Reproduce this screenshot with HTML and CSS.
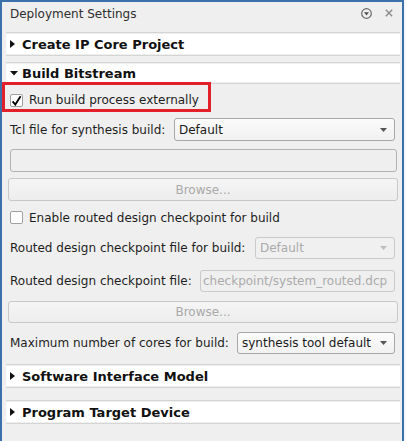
FILE: index.html
```html
<!DOCTYPE html>
<html>
<head>
<meta charset="utf-8">
<link rel="stylesheet" href="styles.css">
</head>
<body>
<div class="panel">
  <div class="titlebar">
    <span class="title">Deployment Settings</span>
    <span class="tb-icons">
      <svg class="ic-menu" width="11" height="11" viewBox="0 0 11 11"><circle cx="5.5" cy="5.5" r="4.8" fill="none" stroke="#6b6b6b" stroke-width="1.2"/><polygon points="3,4.2 8,4.2 5.5,7.4" fill="#505050"/></svg>
      <svg class="ic-close" width="8" height="8" viewBox="0 0 8 8"><path d="M0.8 0.8 L7.2 7.2 M7.2 0.8 L0.8 7.2" stroke="#8c8c8c" stroke-width="1.4" fill="none"/></svg>
    </span>
  </div>

  <div class="sec sec-create">
    <div class="sec-bar"><span class="tw"><svg width="5" height="8" viewBox="0 0 5 8"><polygon points="0,0 5,4 0,8" fill="#111"/></svg></span>Create IP Core Project</div>
  </div>

  <div class="sec sec-build">
    <div class="sec-bar"><span class="tw"><svg width="8" height="5" viewBox="0 0 8 5"><polygon points="0,0 8,0 4,4.5" fill="#111"/></svg></span>Build Bitstream</div>
  </div>

  <div class="build-body">
    <div class="check-row cr1">
      <span class="cb"><svg width="11" height="11" viewBox="0 0 11 11"><path d="M1.6 6.4 L4.3 9.6 L9.6 1.2" fill="none" stroke="#000" stroke-width="1.8"/></svg></span>
      <span>Run build process externally</span>
      <span class="hl"></span>
    </div>

    <div class="row r-tcl">
      <span class="lbl">Tcl file for synthesis build:</span>
      <div class="combo w-tcl"><span class="val">Default</span><svg class="arr" width="7" height="4" viewBox="0 0 7 4"><polygon points="0,0 7,0 3.5,4" fill="#555"/></svg></div>
    </div>

    <div class="field f1"></div>
    <div class="btn b1">Browse...</div>

    <div class="check-row cr2">
      <span class="cb"></span>
      <span>Enable routed design checkpoint for build</span>
    </div>

    <div class="row r-rc">
      <span class="lbl">Routed design checkpoint file for build:</span>
      <div class="combo dis w-rc"><span class="val">Default</span><svg class="arr" width="7" height="4" viewBox="0 0 7 4"><polygon points="0,0 7,0 3.5,4" fill="#bdbdbd"/></svg></div>
    </div>

    <div class="row r-rf">
      <span class="lbl">Routed design checkpoint file:</span>
      <div class="field dis w-rf">checkpoint/system_routed.dcp</div>
    </div>

    <div class="btn b2">Browse...</div>

    <div class="row r-max">
      <span class="lbl">Maximum number of cores for build:</span>
      <div class="combo w-max"><span class="val">synthesis tool default</span><svg class="arr" width="7" height="4" viewBox="0 0 7 4"><polygon points="0,0 7,0 3.5,4" fill="#555"/></svg></div>
    </div>
  </div>

  <div class="sec sec-sw">
    <div class="sec-bar"><span class="tw"><svg width="5" height="8" viewBox="0 0 5 8"><polygon points="0,0 5,4 0,8" fill="#111"/></svg></span>Software Interface Model</div>
  </div>

  <div class="sec sec-prog">
    <div class="sec-bar"><span class="tw"><svg width="5" height="8" viewBox="0 0 5 8"><polygon points="0,0 5,4 0,8" fill="#111"/></svg></span>Program Target Device</div>
  </div>
</div>
</body>
</html>
```

FILE: styles.css
```css
* { box-sizing: border-box; }
html, body { margin: 0; padding: 0; }
body {
  width: 406px;
  height: 441px;
  overflow: hidden;
  background: #f7f7f7;
  font-family: "DejaVu Sans", "Noto Sans", sans-serif;
  font-size: 12px;
  color: #1e1e1e;
}
.panel {
  width: 404px;
  height: 441px;
  border: 2px solid #3b71a8;
  border-bottom: none;
  background: #efefef;
  overflow: hidden;
}
.titlebar {
  display: flex;
  align-items: center;
  height: 24px;
  padding: 0 9px 0 8px;
  margin-bottom: 6px;
  color: #2e2e2e;
}
.title { flex: 1; }
.tb-icons {
  display: flex;
  align-items: center;
  gap: 13px;
  margin-top: -2px;
}
.tb-icons svg { display: block; }

.sec {
  margin: 0 2px 0 4px;
  border-top: 1px solid #d4d4d4;
  border-bottom: 1px solid #d4d4d4;
  padding: 1px 0;
}
.sec-bar {
  display: flex;
  align-items: center;
  height: 20px;
  padding-left: 4px;
  background: #ffffff;
  font-weight: bold;
  font-size: 13px;
  color: #111;
}
.tw {
  width: 12px;
  display: flex;
  align-items: center;
}
.tw svg { display: block; }
.sec-build { margin-top: 6px; }
.sec-build .sec-bar { height: 18px; }
.sec-sw { margin-top: 10px; }
.sec-prog { margin-top: 12px; }

.build-body { padding: 0 7px 0 8px; }

.check-row {
  position: relative;
  display: flex;
  align-items: center;
}
.cr1 { height: 28px; margin-top: 2px; }
.cr2 { height: 25px; margin-top: 4px; }
.cb {
  width: 13px;
  height: 13px;
  border: 1px solid #a0a0a0;
  border-radius: 2px;
  background: #fff;
  margin-right: 6px;
  display: flex;
  align-items: center;
  justify-content: center;
}
.cb svg { display: block; }
.hl {
  position: absolute;
  left: -8px;
  top: -4px;
  width: 209px;
  height: 30px;
  border: 3px solid #e2202b;
}

.row {
  display: flex;
  align-items: center;
}
.lbl { white-space: nowrap; }
.r-tcl { height: 23px; margin-top: 4px; }
.r-rc { height: 22px; margin-top: 7px; }
.r-rf { height: 22px; margin-top: 11px; }
.r-max { height: 22px; margin-top: 9px; }

.combo {
  height: 100%;
  margin-left: auto;
  display: flex;
  align-items: center;
  border: 1px solid #a8a8a8;
  border-radius: 3px;
  background: linear-gradient(#fbfbfb, #f1f1f1);
  padding: 0 7px 0 4px;
  color: #1a1a1a;
}
.combo .val { flex: 1; white-space: nowrap; }
.combo .arr { display: block; }
.combo.dis {
  border-color: #cacaca;
  background: #f0f0f0;
  color: #ababab;
}
.w-tcl { width: 221px; }
.w-rc { width: 140px; }
.w-max { width: 158px; }

.field {
  border: 1px solid #b2b2b2;
  border-radius: 3px;
  background: #efefef;
}
.f1 {
  height: 23px;
  margin-top: 8px;
  margin-right: -2px;
}
.field.dis {
  height: 100%;
  margin-left: auto;
  border-color: #cacaca;
  color: #ababab;
  padding-left: 2px;
  display: flex;
  align-items: center;
  white-space: nowrap;
  overflow: hidden;
}
.w-rf { width: 195px; }

.btn {
  display: flex;
  align-items: center;
  justify-content: center;
  margin: 0 -3px 0 -2px;
  border: 1px solid #c8c8c8;
  border-radius: 3px;
  background: linear-gradient(#f5f5f5, #ededed);
  color: #a9a9a9;
}
.b1 { height: 23px; margin-top: 6px; }
.b2 { height: 22px; margin-top: 9px; }
```
